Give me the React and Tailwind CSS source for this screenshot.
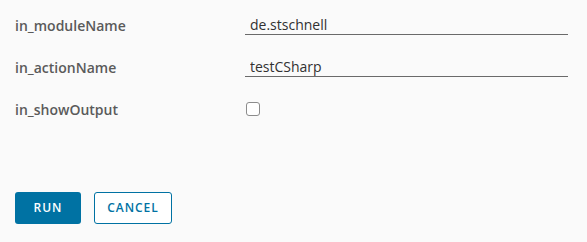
export default function App() {
  const rows = [
    { label: 'in_moduleName', value: 'de.stschnell' },
    { label: 'in_actionName', value: 'testCSharp' },
  ];

  return (
    <div className="h-[242px] w-[587px] bg-[#fafafa] px-[15px] pt-[13px] font-['Open_Sans',sans-serif] text-[14px]">
      <div className="flex flex-col gap-[18px]">
        {rows.map((row) => (
          <div key={row.label} className="flex h-[24px] items-center">
            <label className="w-[230px] text-[14px] font-semibold text-[#5a5a5a]">{row.label}</label>
            <input
              readOnly
              value={row.value}
              className="h-[20px] w-[323px] border-b border-[#6a6a6a] bg-transparent px-[5px] text-[#313131] outline-none"
            />
          </div>
        ))}
        <div className="flex h-[24px] items-center">
          <label className="w-[230px] text-[14px] font-semibold text-[#5a5a5a]">in_showOutput</label>
          <span className="ml-[1px] block h-[14px] w-[14px] rounded-[3px] border border-[#8c8c8c] bg-white" />
        </div>
      </div>

      <div className="mt-[71px] flex gap-[13px]">
        <button className="h-[32px] w-[66px] rounded-[3px] bg-[#0072a3] text-[12px] font-semibold tracking-[0.08em] text-white">
          RUN
        </button>
        <button className="h-[32px] w-[78px] rounded-[3px] border border-[#0072a3] bg-white text-[12px] font-semibold tracking-[0.08em] text-[#0072a3]">
          CANCEL
        </button>
      </div>
    </div>
  );
}
